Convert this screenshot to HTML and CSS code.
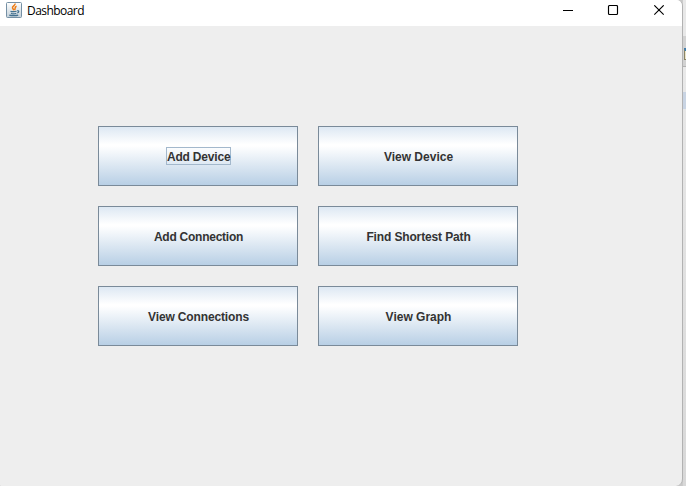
FILE: index.html
```html
<!DOCTYPE html>
<html lang="en">
<head>
<meta charset="utf-8">
<title>Dashboard</title>
<link rel="stylesheet" href="styles.css">
</head>
<body>
<main class="window">
  <header class="titlebar">
    <svg class="app-icon" width="16" height="16" viewBox="0 0 16 16">
      <defs><linearGradient id="tile" x2="0" y2="1"><stop offset="0" stop-color="#fff"/><stop offset="1" stop-color="#c3d0d9"/></linearGradient></defs>
      <rect x=".5" y=".5" width="15" height="15" rx="1" fill="url(#tile)" stroke="#7590a5"/>
      <path d="M9 1.5c.8 2-3.2 2.8-2.5 4.4.2.8 1.3 1.3 1.1 2.5M10.6 4.3C7.9 5.1 10 6.2 8.6 8" fill="none" stroke="#ee7a12" stroke-width="1.5"/>
      <path d="M4.5 9.2c1 .6 4.5.6 6 0M5 11.2c1 .5 4 .5 5.3 0M3.3 13.1c1.8.7 7.3.7 8.9 0M11 8.9c2.5-.7 2.2 1.6.2 2.1" fill="none" stroke="#42708f" stroke-width="1.2"/>
    </svg>
    <span class="title">Dashboard</span>
    <svg class="controls" width="103" height="12" viewBox="0 0 103 12">
      <g fill="none" stroke="#000">
        <path d="M0 5.5h10"/>
        <rect x="45.5" y=".5" width="9" height="9" rx="1" stroke-width="1.15"/>
        <path d="M91.3.3l9.4 9.4M100.7.3l-9.4 9.4" stroke-width="1.1"/>
      </g>
    </svg>
  </header>
  <section class="panel">
    <button class="button"><span class="label focused">Add Device</span></button>
    <button class="button"><span class="label">View Device</span></button>
    <button class="button"><span class="label tighter">Add Connection</span></button>
    <button class="button"><span class="label tight">Find Shortest Path</span></button>
    <button class="button"><span class="label tight">View Connections</span></button>
    <button class="button"><span class="label">View Graph</span></button>
  </section>
</main>
<aside class="behind"><div class="toolbar"><i class="thumb"></i></div><div class="selected"></div></aside>
</body>
</html>
```
FILE: styles.css
```css
* { box-sizing: border-box; }
body {
  margin: 0;
  width: 686px;
  height: 486px;
  overflow: hidden;
  display: flex;
  background: linear-gradient(90deg, #c8c8c8 682px, #e2e2e2 686px);
}
.window {
  width: 683px;
  height: 486px;
  border-right: 1px solid #b2b2b2;
  border-radius: 0 6px 7px 1px;
  overflow: hidden;
  background: #eee;
}
.titlebar {
  height: 26px;
  display: flex;
  align-items: flex-start;
  background: #fff;
}
.app-icon { margin: 2px 5px 0 6px; }
.title {
  margin-top: 3px;
  font: 12px/16px "Open Sans", sans-serif;
  letter-spacing: -0.55px;
  color: #000;
}
.controls { margin: 5px 16px 0 auto; }
.panel {
  display: grid;
  grid-template-columns: 200px 200px;
  grid-auto-rows: 60px;
  gap: 20px;
  padding: 100px 0 0 98px;
}
.button {
  display: flex;
  align-items: center;
  justify-content: center;
  padding: 0 0 0 1px;
  border: 1px solid #7a8a99;
  border-radius: 0;
  background: linear-gradient(#dde8f3 0%, #fff 30%, #fff 33%, #b8cfe5 100%);
  color: #333;
  font: bold 12px/16px "Liberation Sans", Arial, sans-serif;
}
.label { white-space: nowrap; margin-top: 2px; }
.tight { letter-spacing: -0.14px; }
.tighter { letter-spacing: -0.25px; }
.focused {
  width: 65px;
  height: 18px;
  margin: 0 0 1px;
  border: 1px solid #a3b8cc;
  line-height: 18px;
  letter-spacing: -0.2px;
}
.behind {
  width: 3px;
  height: 486px;
  padding-top: 36px;
  background: linear-gradient(#e8e8e8 36px, #d9d9d9 36px, #e9e9e9 68px, #d8d8d8 100%);
}
.toolbar {
  height: 31px;
  padding: 12px 0 0 1px;
  background: #d2d2d2;
  border-bottom: 1px solid #b2b2b2;
}
.thumb {
  display: block;
  height: 12px;
  border: 1px solid #8a8466;
  border-top: 3px solid #397db4;
  border-right: 0;
  background: #ede5c8;
}
.selected { height: 17px; margin-top: 25px; background: #c9d4e3; }
```
